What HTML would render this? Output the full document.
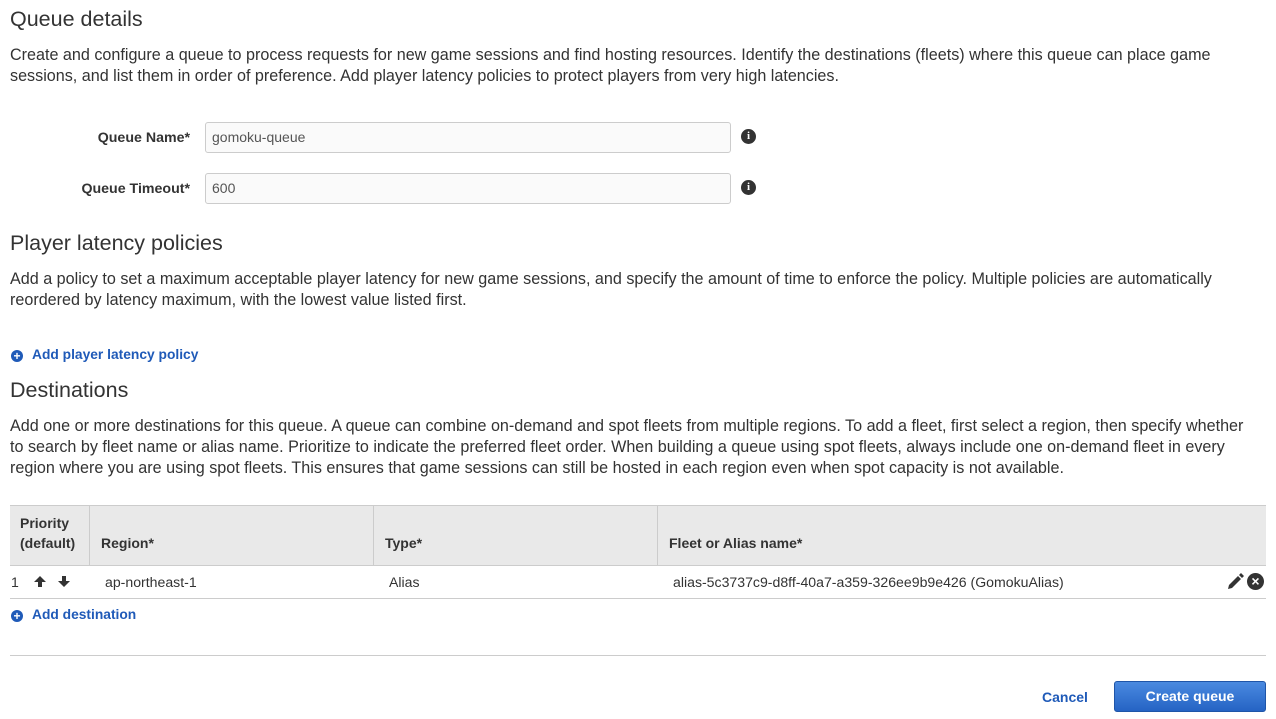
<!DOCTYPE html>
<html><head><style>
body{margin:0;width:1276px;height:719px;background:#fff;font-family:"Liberation Sans",sans-serif;color:#333;position:relative;overflow:hidden}
.a{position:absolute;white-space:nowrap}
h2{position:absolute;margin:0;font-weight:normal;font-size:21.5px;color:#333;left:10px}
p{position:absolute;margin:0;left:10px;width:1262px;font-size:16.15px;line-height:21px;color:#333;white-space:nowrap}
.lbl{font-weight:bold;font-size:14.2px;text-align:right;width:190px;left:0}
.in{position:absolute;left:205px;width:526px;height:31px;border:1px solid #ccc;border-radius:3px;background:#fafafa;box-sizing:border-box;font-size:14px;color:#555;padding:6px 6px}
.info{position:absolute;left:741px;width:15px;height:15px;border-radius:50%;background:#333;color:#fff;font:bold 11px "Liberation Serif",serif;text-align:center;line-height:15px}
.link{color:#1f5ab8;font-weight:bold;font-size:13.8px}
.plus{display:inline-block;width:12px;height:12px;border-radius:50%;background:#1f5ab8;color:#fff;font-size:12px;line-height:12px;text-align:center;margin-right:9px;vertical-align:-1px}
.th{position:absolute;top:506px;height:59px;background:#e9e9e9;border-right:1px solid #ccc;box-sizing:border-box;font-weight:bold;font-size:14px}
.th span{position:absolute;left:11px;bottom:12px;line-height:20px}
.td{font-size:14.1px;top:574px}
</style></head><body>
<h2 style="top:7px">Queue details</h2>
<p style="top:45px">Create and configure a queue to process requests for new game sessions and find hosting resources. Identify the destinations (fleets) where this queue can place game<br>sessions, and list them in order of preference. Add player latency policies to protect players from very high latencies.</p>
<div class="a lbl" style="top:130px">Queue Name*</div>
<div class="in" style="top:122px">gomoku-queue</div><div class="info" style="top:129px">i</div>
<div class="a lbl" style="top:181px">Queue Timeout*</div>
<div class="in" style="top:173px">600</div><div class="info" style="top:180px">i</div>
<h2 style="top:231px">Player latency policies</h2>
<p style="top:269px">Add a policy to set a maximum acceptable player latency for new game sessions, and specify the amount of time to enforce the policy. Multiple policies are automatically<br>reordered by latency maximum, with the lowest value listed first.</p>
<div class="a link" style="left:11px;top:347px"><span class="plus">+</span>Add player latency policy</div>
<h2 style="top:378px">Destinations</h2>
<p style="top:416px">Add one or more destinations for this queue. A queue can combine on-demand and spot fleets from multiple regions. To add a fleet, first select a region, then specify whether<br>to search by fleet name or alias name. Prioritize to indicate the preferred fleet order. When building a queue using spot fleets, always include one on-demand fleet in every<br>region where you are using spot fleets. This ensures that game sessions can still be hosted in each region even when spot capacity is not available.</p>
<div style="position:absolute;left:10px;top:505px;width:1256px;border-top:1px solid #ccc"></div>
<div class="th" style="left:10px;width:80px"><span style="left:10px">Priority<br>(default)</span></div>
<div class="th" style="left:90px;width:284px"><span>Region*</span></div>
<div class="th" style="left:374px;width:284px"><span>Type*</span></div>
<div class="th" style="left:658px;width:608px;border-right:none"><span>Fleet or Alias name*</span></div>
<div style="position:absolute;left:10px;top:565px;width:1256px;border-top:1px solid #ccc"></div>
<div class="a td" style="left:11px">1</div>
<svg style="position:absolute;left:33px;top:575px" width="40" height="13" viewBox="0 0 40 13"><path d="M7 1L1 7h4v5h4V7h4z" fill="#333"/><path d="M31 12l6-6h-4V1h-4v5h-4z" fill="#333"/></svg>
<div class="a td" style="left:105px">ap-northeast-1</div>
<div class="a td" style="left:389px">Alias</div>
<div class="a td" style="left:673px">alias-5c3737c9-d8ff-40a7-a359-326ee9b9e426 (GomokuAlias)</div>
<svg style="position:absolute;left:1227px;top:573px" width="17" height="17" viewBox="0 0 17 17"><path d="M1 16l1-4 9-9 3 3-9 9z M12 2l2-2 3 3-2 2z" fill="#333"/></svg>
<div style="position:absolute;left:1247px;top:573px;width:17px;height:17px;border-radius:50%;background:#333;color:#fff;font:bold 14px/17px 'Liberation Sans';text-align:center">×</div>
<div style="position:absolute;left:10px;top:598px;width:1256px;border-top:1px solid #ccc"></div>
<div class="a link" style="left:11px;top:607px"><span class="plus">+</span>Add destination</div>
<div style="position:absolute;left:10px;top:655px;width:1256px;border-top:1px solid #ccc"></div>
<div class="a link" style="left:1042px;top:689px;font-size:14px">Cancel</div>
<div style="position:absolute;left:1114px;top:681px;width:152px;height:31px;border-radius:3px;background:linear-gradient(#4a8ae0,#2563c4);border:1px solid #1f55a8;box-sizing:border-box;color:#fff;font-weight:bold;font-size:14px;text-align:center;line-height:29px">Create queue</div>
</body></html>
